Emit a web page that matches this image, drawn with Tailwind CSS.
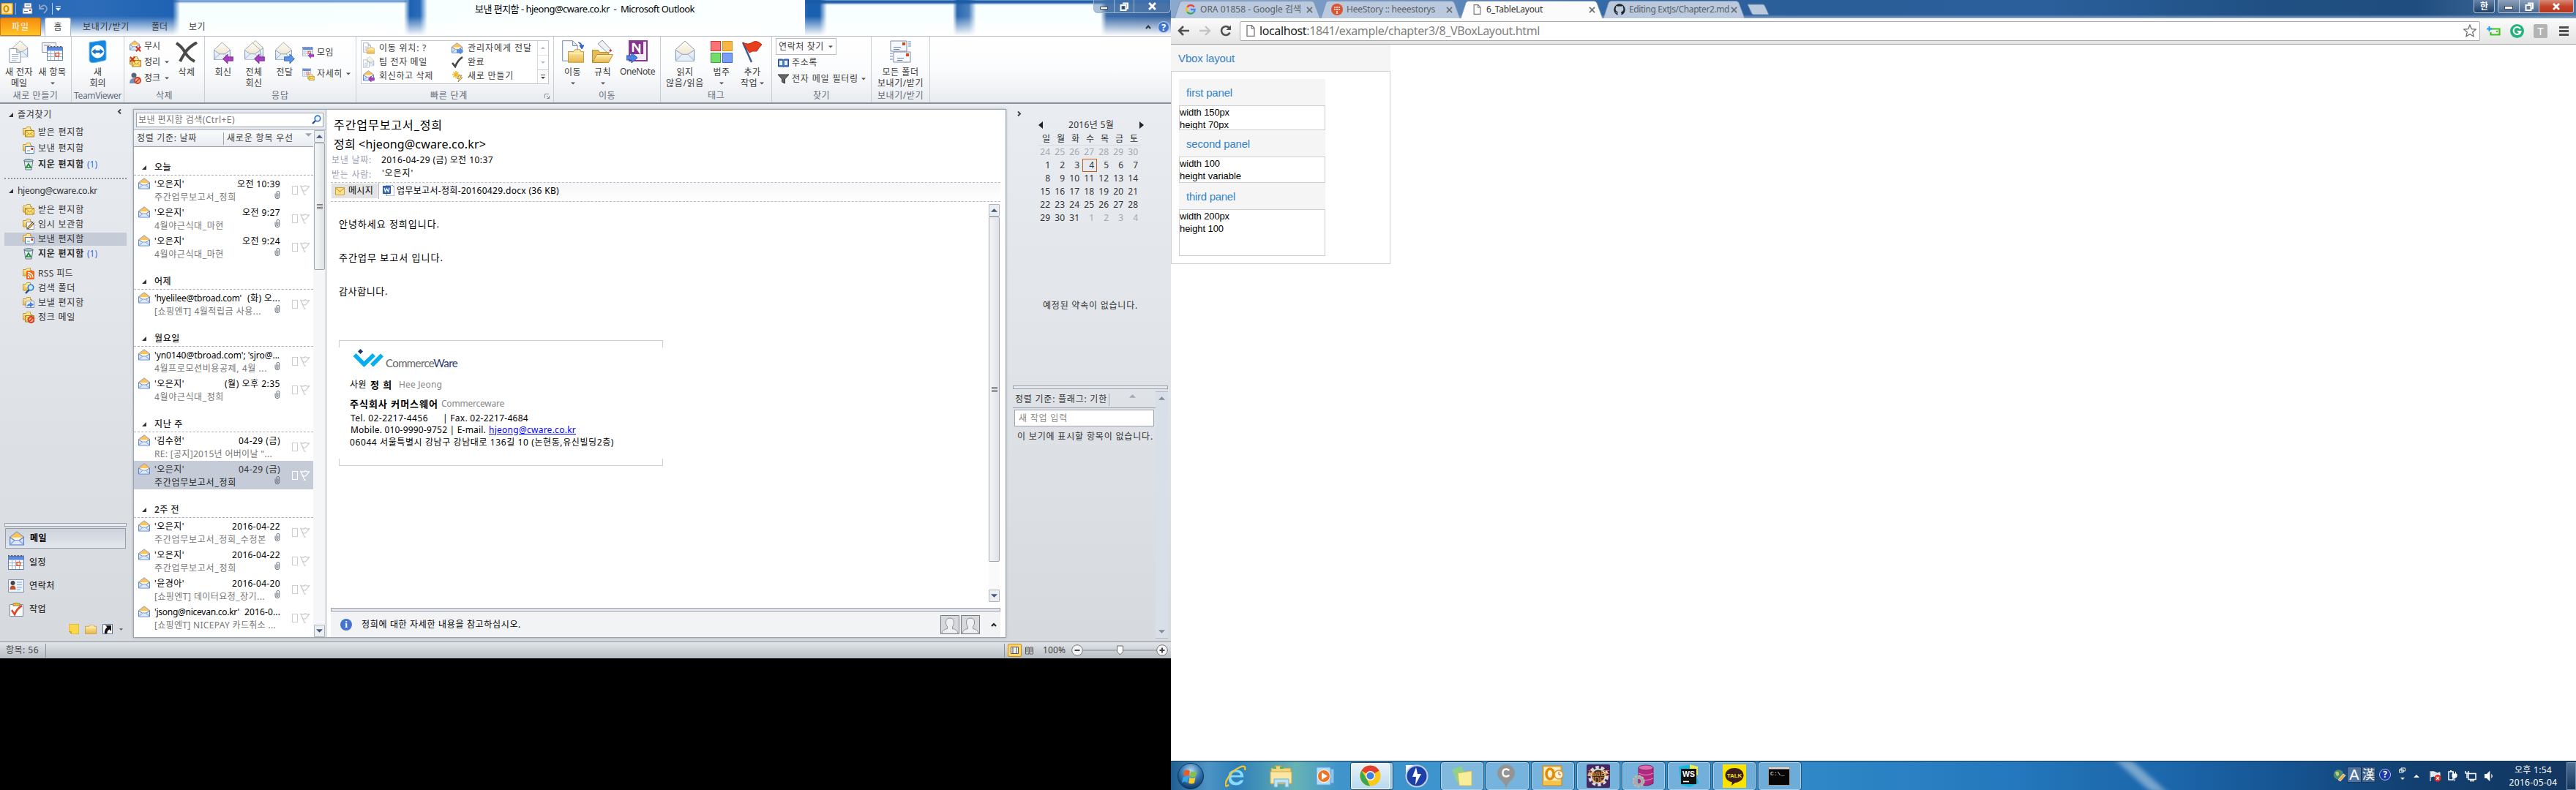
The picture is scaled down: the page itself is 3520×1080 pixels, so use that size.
<!DOCTYPE html>
<html lang="ko">
<head>
<meta charset="utf-8">
<title>Desktop</title>
<script src="https://cdn.jsdelivr.net/npm/@tailwindcss/browser@4"></script>
</head>
<body class="overflow-hidden bg-white">
<svg class="absolute size-0">
<defs>
<linearGradient id="gy" x1="0" y1="0" x2="0" y2="1"><stop offset="0" stop-color="#fdf0b0"/><stop offset="1" stop-color="#e8b84c"/></linearGradient>
<linearGradient id="gb" x1="0" y1="0" x2="0" y2="1"><stop offset="0" stop-color="#ffffff"/><stop offset="1" stop-color="#a9c4ee"/></linearGradient>
<linearGradient id="gg" x1="0" y1="0" x2="0" y2="1"><stop offset="0" stop-color="#f6faff"/><stop offset="1" stop-color="#cfdceb"/></linearGradient>
<linearGradient id="gc" x1="0" y1="0" x2="0" y2="1"><stop offset="0" stop-color="#fffdf4"/><stop offset="1" stop-color="#e6dcc0"/></linearGradient>
<radialGradient id="orb" cx=".5" cy=".3" r=".7"><stop offset="0" stop-color="#b9dcf0"/><stop offset=".5" stop-color="#3a7db5"/><stop offset="1" stop-color="#0d3563"/></radialGradient>
</defs>
<symbol id="env" viewBox="0 0 16 16"><path d="M.5 6.5 8 .7l7.500 5.800V14H.5z" fill="#f9c45c" stroke="#8795c6" stroke-width=".9"/><path d="M2 7h12l-3 3H5z" fill="#fff4d4"/><path d="M.5 7 6 10.500h4L15.500 7v8H.5z" fill="url(#gb)" stroke="#5b82cf"/><path d="m1 14.500 5-4.500h4l5 4.500" fill="#dce9fc" stroke="#7fa3e0"/></symbol>
<symbol id="bigenv" viewBox="0 0 30 32"><path d="M2 13 15 1l13 12v16H2z" fill="url(#gc)" stroke="#8e97ab"/><path d="M2 14l9 6h8l9-6v15H2z" fill="url(#gg)" stroke="#7f92b5"/><path d="m2 29 9-9h8l9 9" fill="#e6eef8" stroke="#9aa9c4"/></symbol>
<symbol id="pl" viewBox="0 0 15 14"><path d="M7 0v4h8v6H7v4L0 7z" fill="#a43fc0" stroke="#7a2496" stroke-width=".8"/></symbol>
<symbol id="br" viewBox="0 0 15 14"><path d="M8 0v4H0v6h8v4l7-7z" fill="#5a93e6" stroke="#2858ae" stroke-width=".8"/></symbol>
<symbol id="folder" viewBox="0 0 16 16"><path d="M.5 2.500h4l1-2h5v3h2V11H.5z" fill="url(#gy)" stroke="#c29a45"/><path d="M3.500 5H12v2" fill="none" stroke="#fff6cf"/></symbol>
<symbol id="bigfolder" viewBox="0 0 24 20"><path d="M.5 3.500h8l2-3h8l1 3h4v16H.5z" fill="url(#gy)" stroke="#b98d35"/><path d="M1.500 6.500h21" stroke="#fff6cf"/></symbol>
<symbol id="inbox" viewBox="0 0 16 16"><use href="#folder" width="16" height="16"/><path d="M3.500 5.500h12v8.500h-12z" fill="#ffe27c" stroke="#a57f1d"/><path d="m4 6 5.500 5L15 6M4 13.500l4-4M15 13.500l-4-4" fill="none" stroke="#c39424"/></symbol>
<symbol id="sent" viewBox="0 0 16 16"><use href="#folder" width="16" height="16"/><path d="M3.500 5.500h12v9h-12z" fill="#f4f8ff" stroke="#5877ae"/><path d="M11.500 7h2.500v3h-2.500z" fill="#c43a22"/><path d="M6 11h4" stroke="#6b84b3"/></symbol>
<symbol id="draft" viewBox="0 0 16 16"><use href="#folder" width="16" height="16"/><path d="M5.500 4.500h10v10h-10z" fill="#fff" stroke="#8a929e"/><path d="m6 13 7-8 2 2-7 7z" fill="#f6b45b" stroke="#5c4a3a"/></symbol>
<symbol id="trash" viewBox="0 0 16 16"><path d="M2 2h12l-2 13H4z" fill="#e9f2f8" stroke="#5c7284"/><ellipse cx="8" cy="2.500" rx="6.200" ry="1.700" fill="#bcd1de" stroke="#4c6274"/><path d="m8 7 3 5H5z" fill="none" stroke="#188a2c" stroke-width="1.700"/></symbol>
<symbol id="rss" viewBox="0 0 16 16"><use href="#folder" width="16" height="16"/><rect x="5" y="4" width="11" height="12" rx="1.500" fill="#ea6a1e"/><circle cx="8" cy="13" r="1.200" fill="#fff"/><path d="M7 9.500a4 4 0 0 1 4 4M7 6.500a7 7 0 0 1 7 7" fill="none" stroke="#fff" stroke-width="1.400"/></symbol>
<symbol id="sfold" viewBox="0 0 16 16"><use href="#folder" width="16" height="16"/><path d="m9 10-5 5" stroke="#1d4c8c" stroke-width="2.400"/><circle cx="11" cy="7" r="3.700" fill="#c9ecfb" stroke="#2f77c8" stroke-width="1.600"/></symbol>
<symbol id="outbox" viewBox="0 0 16 16"><use href="#folder" width="16" height="16"/><path d="M4.500 5.500h11v9h-11z" fill="#eef4ff" stroke="#8090b0"/><path d="M6 13q0-4 4-4V6.500l5 4-5 4V12q-2 0-4 1z" fill="#4c83e0"/></symbol>
<symbol id="junk" viewBox="0 0 16 16"><use href="#inbox" width="16" height="16"/><circle cx="11.500" cy="11" r="4" fill="#f2a48c" stroke="#d23a17" stroke-width="1.800"/><path d="m9 13.500 5-5" stroke="#d23a17" stroke-width="1.600"/></symbol>
<symbol id="clip" viewBox="0 0 8 12"><path d="M.8 4v4.500a3 3 0 0 0 6.200 0v-6a2 2 0 0 0-4.200 0v6a1 1 0 0 0 2.200 0V3.500" fill="none" stroke="#56606f" stroke-width="1"/></symbol>
<symbol id="flag" viewBox="0 0 15 15"><path d="M1 1.500q4 2 7-1 2 3 6 1l-6 7H4.500zM1 1.500l5.500 12.500h2" fill="none" stroke="currentColor" stroke-width="1.300"/></symbol>
<symbol id="cal" viewBox="0 0 22 20"><path d="M.5 1.500h21v18H.5z" fill="#fff" stroke="#5f7fb8"/><path d="M1 2h20v4.500H1z" fill="#5c8ae0"/><path d="M1 10.500h20M1 14.500h20M5.500 7v12M10.500 7v12M15.500 7v12" stroke="#9fb2d4"/><path d="M0 .8h22" stroke="#444" stroke-dasharray="1 1" stroke-width="1.500"/><rect x="12" y="9.500" width="4.500" height="4.500" fill="#fff" stroke="#e0401a" stroke-width="1.300"/></symbol>
<symbol id="doc" viewBox="0 0 18 22"><path d="M.7.7h11l5.600 5.600v15H.7z" fill="#fff" stroke="#7b8ba8"/><path d="M11.500 1v5.500H17" fill="#dbe4f2" stroke="#7b8ba8"/><path d="M4 9.500h10M4 12.500h10M4 15.500h10M4 18.500h7" stroke="#8e9fc0"/></symbol>
<symbol id="bigdoc" viewBox="0 0 22 29"><path d="M.7.7h14l6.500 6.500v21H.7z" fill="#fbfcff" stroke="#7b8ba8"/><path d="M14.500 1v6.500H21" fill="#dbe4f2" stroke="#7b8ba8"/></symbol>
<symbol id="pg" viewBox="0 0 12 16"><path d="M1 .7h6.500L11 4.500v10.800H1z" fill="#fff" stroke="#777" stroke-width="1.300"/><path d="M7.200.8v4H11" fill="none" stroke="#777" stroke-width="1.200"/></symbol>
<symbol id="person" viewBox="0 0 26 26"><path d="M.5.500h25v25H.5z" fill="#d6d8db" stroke="#777a80"/><path d="M2 24.500q1-5 7.500-6V16Q7 13 7.500 9q.5-5 5.500-5t5.500 5q.5 4-2 7v2.500q6.500 1 7.500 6" fill="#eff0f1" stroke="#8e9196"/></symbol>
<symbol id="up" viewBox="0 0 10 5"><path d="M0 5 5 0l5 5z" fill="currentColor"/></symbol>
<symbol id="dn" viewBox="0 0 10 5"><path d="M0 0h10L5 5z" fill="currentColor"/></symbol>
<symbol id="x" viewBox="0 0 10 10"><path d="m1 1 8 8M9 1 1 9" stroke="#6a6e75" stroke-width="1.800" fill="none"/></symbol>
<symbol id="tri" viewBox="0 0 6 6"><path d="M6 0v6H0z" fill="#333"/></symbol>
</svg>

<div class="flex h-[1080px] w-[3520px] font-['Noto_Sans','Noto_Sans_CJK_KR',sans-serif] text-[12px] leading-[16px] whitespace-nowrap text-[#333]">

<!-- Mail client on the left monitor -->
<div class="flex h-[1080px] w-[1600px] flex-col bg-black">
<div class="flex h-[900px] flex-col">

<header class="relative flex h-[49px] flex-col bg-[linear-gradient(90deg,#2465b4_0,#2d6db9_120px,#1f62b3_236px,#f6fffe_246px,#f8ffff_552px,#1f62b3_560px,#2a6cb9_574px,#f8ffff_584px,#fbffff_1060px,#1a60b0_1104px,#1a60b0_1120px,#f8ffff_1130px,#f8ffff_1302px,#2b68b0_1308px,#4a80be_1324px,#f8ffff_1334px,#f8ffff_1504px,#3a6ba8_1512px,#35639f_1600px)]">
<div class="absolute inset-0 bg-[linear-gradient(180deg,rgba(255,255,255,0)_45%,#fff_100%)]"></div>
<div class="absolute top-0 left-[236px] h-[3px] w-[320px] bg-[#1f62b3]/80 blur-[1px]"></div>
<div class="absolute top-0 left-[1100px] h-[5px] w-[500px] bg-[#1a5aa5] blur-[1px]"></div>
<div class="absolute top-0 left-[1040px] h-[49px] w-[60px] bg-[#fbffff]"></div>
<div class="relative flex h-[24px] items-center">
<svg class="ml-[1px] h-[16px] w-[17px]" viewBox="0 0 17 16"><rect width="17" height="16" rx="2" fill="#e9a018"/><rect x="2" y="1.500" width="13" height="13" fill="#ffe9a4"/><ellipse cx="7.500" cy="8" rx="3" ry="4" fill="none" stroke="#d88a00" stroke-width="2.200"/></svg>
<i class="ml-[3px] h-4 w-px bg-white/50"></i>
<svg class="ml-[6px] h-[16px] w-[17px]" viewBox="0 0 17 16"><path d="M5 0h10v7H5z" fill="#fff" stroke="#6b7f9c"/><path d="M3 7h13v8H3z" fill="#f6f9ff" stroke="#6b7f9c"/><path d="M12 9h2v2h-2z" fill="#c43a22"/><path d="M0 4h4M0 7h3M0 11h2M5 11.500h5M7 3h6" stroke="#4a6ea8"/></svg>
<svg class="ml-[7px] h-[14px] w-[13px]" viewBox="0 0 13 14"><path d="M2 1v6h6M2.500 6Q8 0 11 4t-3 9" fill="none" stroke="#8ba4c8" stroke-width="1.800"/></svg>
<i class="ml-[6px] h-4 w-px bg-white/70"></i>
<svg class="ml-[4px] h-[8px] w-[7px]" viewBox="0 0 7 8"><path d="M0 1h7" stroke="#fff"/><path d="M0 3h7L3.500 7z" fill="#fff"/></svg>
<div class="ml-[566px] text-[13px] text-black"><span data-w="300">보낸 편지함 - hjeong@cware.co.kr&nbsp; -&nbsp; Microsoft Outlook</span></div>
<div class="ml-auto flex h-[18px] w-[106px] self-start rounded-b-md border border-t-0 border-[#9db4cf] bg-[#5e83b0]/50">
<div class="flex w-[28px] items-center justify-center border-r border-[#9db4cf]"><i class="mt-1 h-[4px] w-[11px] border border-[#445] bg-white"></i></div>
<div class="flex w-[27px] items-center justify-center border-r border-[#9db4cf]"><svg class="h-[12px] w-[12px]" viewBox="0 0 12 12"><path d="M4 1.500h7v7H9M1.500 4h7v7h-7z" fill="none" stroke="#fff" stroke-width="2"/><path d="M3.500 6h3v3h-3z" fill="#345"/></svg></div>
<div class="flex flex-1 items-center justify-center"><svg class="h-[11px] w-[11px]" viewBox="0 0 10 10"><path d="m1 1 8 8M9 1 1 9" stroke="#fff" stroke-width="2.600"/></svg></div>
</div>
</div>
<nav class="relative flex h-[25px] text-[12px] text-[#3b3b3b]">
<div class="flex w-[56px] items-center justify-center rounded-t-[3px] border border-[#d8780c] bg-gradient-to-b from-[#f58a0c] to-[#ffc426] text-white"><span data-w="24">파일</span></div>
<div class="ml-[5px] flex w-[36px] items-center justify-center rounded-t-[3px] border border-b-0 border-[#a6b6c6] bg-white"><span>홈</span></div>
<div class="ml-[16px] flex items-center"><span data-w="64">보내기/받기</span></div>
<div class="ml-[30px] flex items-center"><span data-w="22">폴더</span></div>
<div class="ml-[29px] flex items-center"><span data-w="23">보기</span></div>
<div class="ml-auto flex items-center gap-[9px] pr-[2px]"><svg class="h-[7px] w-[8px]" viewBox="0 0 8 7"><path d="m1 6 3-3.500L7 6" fill="none" stroke="#333" stroke-width="2"/></svg><span class="flex size-[16px] items-center justify-center rounded-full border border-white/60 bg-[#3f74cf] text-[13px] font-bold text-white">?</span></div>
</nav>
</header>

<!-- Ribbon -->
<div class="flex h-[93px] border-t border-b-2 border-t-[#b4bac2] border-b-[#8b8f96] bg-gradient-to-b from-white via-[#fbfcfd] to-[#e8ebef] text-[#3b3b3b]">
<section class="flex w-[98px] flex-col border-r border-[#c9ced5]">
<div class="flex h-[73px] pt-[5px]">
<div class="flex w-[49px] flex-col items-center pl-[3px]"><div class="relative h-[31px] w-[29px]"><svg class="absolute top-0 right-0 h-[25px] w-[27px]"><use href="#bigenv"/></svg><svg class="absolute bottom-0 left-0 h-[20px] w-[17px]"><use href="#doc"/></svg></div><span class="mt-[5px]" data-w="38">새 전자</span><span class="mt-[-1px]" data-w="22">메일</span></div>
<div class="flex w-[45px] flex-col items-center"><div class="relative h-[31px] w-[29px]"><svg class="absolute top-[3px] left-0 h-[14px] w-[20px]" viewBox="0 0 20 14"><path d="M.5.500h19v13H.5z" fill="#f2f4f8" stroke="#8a95aa"/><path d="M3 4h9" stroke="#889"/></svg><svg class="absolute right-0 bottom-[3px] h-[20px] w-[22px]"><use href="#cal"/></svg></div><span class="mt-[5px]" data-w="38">새 항목</span><svg class="mt-[5px] h-[4px] w-[6px] text-[#555]"><use href="#dn"/></svg></div>
</div>
<div class="flex justify-center text-[#636d7b]"><span data-w="62">새로 만들기</span></div>
</section>
<section class="flex w-[72px] flex-col border-r border-[#c9ced5]">
<div class="flex h-[73px] flex-col items-center pt-[5px]"><svg class="h-[31px] w-[27px]" viewBox="0 0 27 31"><path d="M2 3 22 0q3 0 3 3v22q0 3-3 3L8 31Q2 31 2 27z" fill="#1587dd" stroke="#7cc0f0"/><circle cx="13.500" cy="15.500" r="9" fill="#fff"/><path d="m5.500 15.500 5-4v2.500h6v-2.500l5 4-5 4V17h-6v2.500z" fill="#1474c8"/></svg><span class="mt-[5px]">새</span><span class="mt-[-1px]" data-w="22">회의</span></div>
<div class="flex justify-center text-[#636d7b]"><span data-w="65">TeamViewer</span></div>
</section>
<section class="flex w-[110px] flex-col border-r border-[#c9ced5]">
<div class="flex h-[73px] pl-[7px]">
<div class="flex w-[63px] flex-col gap-[6px] pt-[5px]">
<div class="flex items-center gap-[4px]"><div class="relative size-4"><svg class="size-[14px]"><use href="#env"/></svg><svg class="absolute right-0 bottom-0 size-[8px]" viewBox="0 0 10 10"><path d="m1 1 8 8M9 1 1 9" stroke="#d8341c" stroke-width="2.400"/></svg></div><span data-w="22">무시</span></div>
<div class="flex items-center gap-[4px]"><div class="relative size-4"><svg class="size-4"><use href="#inbox"/></svg><svg class="absolute top-0 left-0 size-[8px]" viewBox="0 0 10 10"><path d="m1 1 8 8M9 1 1 9" stroke="#d8341c" stroke-width="2.400"/></svg></div><span data-w="22">정리</span><svg class="ml-[2px] h-[4px] w-[6px] text-[#555]"><use href="#dn"/></svg></div>
<div class="flex items-center gap-[4px]"><svg class="size-4" viewBox="0 0 16 16"><circle cx="6" cy="4" r="3.500" fill="#55657c"/><path d="M0 15q0-7 6-7t6 7z" fill="#6d8fc4"/><circle cx="11" cy="11" r="4" fill="#f6b09c" stroke="#d23a17" stroke-width="1.800"/><path d="m8.500 13.500 5-5" stroke="#d23a17" stroke-width="1.600"/></svg><span data-w="22">정크</span><svg class="ml-[2px] h-[4px] w-[6px] text-[#555]"><use href="#dn"/></svg></div>
</div>
<div class="flex flex-col items-center pt-[7px]"><svg class="h-[29px] w-[30px]" viewBox="0 0 30 29"><path d="M1 2q8 5 12 13Q9 21 6 27M29 1Q17 8 13 15q5 8 13 12" fill="none" stroke="#4a4a4a" stroke-width="4"/></svg><span class="mt-[5px]" data-w="23">삭제</span></div>
</div>
<div class="flex justify-center text-[#636d7b]"><span data-w="23">삭제</span></div>
</section>
<section class="flex w-[207px] flex-col border-r border-[#c9ced5]">
<div class="flex h-[73px] pt-[7px]">
<div class="ml-[4px] flex w-[42px] flex-col items-center"><div class="relative h-[30px] w-[28px]"><svg class="h-[27px] w-[25px]"><use href="#bigenv"/></svg><svg class="absolute right-0 bottom-0 h-[13px] w-[15px]"><use href="#pl"/></svg></div><span class="mt-[4px]" data-w="23">회신</span></div>
<div class="flex w-[42px] flex-col items-center"><div class="relative h-[30px] w-[29px]"><svg class="absolute top-[-3px] left-[4px] h-[27px] w-[24px]"><use href="#bigenv"/></svg><svg class="absolute top-0 left-0 h-[27px] w-[24px]"><use href="#bigenv"/></svg><svg class="absolute right-0 bottom-0 h-[13px] w-[15px]"><use href="#pl"/></svg></div><span class="mt-[4px]" data-w="23">전체</span><span class="mt-[-1px]" data-w="23">회신</span></div>
<div class="flex w-[42px] flex-col items-center"><div class="relative h-[30px] w-[28px]"><svg class="h-[27px] w-[25px]"><use href="#bigenv"/></svg><svg class="absolute right-0 bottom-0 h-[13px] w-[15px]"><use href="#br"/></svg></div><span class="mt-[4px]" data-w="23">전달</span></div>
<div class="flex flex-col gap-[13px] pt-[7px] pl-[3px]">
<div class="flex items-center gap-[4px]"><div class="relative size-4"><svg class="h-[13px] w-[15px]"><use href="#cal"/></svg><svg class="absolute right-0 bottom-0 h-[8px] w-[8px]"><use href="#pl"/></svg></div><span data-w="23">모임</span></div>
<div class="flex items-center gap-[4px]"><div class="relative size-4"><svg class="h-[12px] w-[12px]"><use href="#cal"/></svg><svg class="absolute right-[-1px] bottom-[-2px] size-[10px]"><use href="#inbox"/></svg></div><span data-w="35">자세히</span><svg class="ml-[1px] h-[4px] w-[6px] text-[#555]"><use href="#dn"/></svg></div>
</div>
</div>
<div class="flex justify-center text-[#636d7b]"><span data-w="24">응답</span></div>
</section>
<section class="flex w-[270px] flex-col border-r border-[#c9ced5]">
<div class="flex h-[73px] px-[6px] pt-[5px]">
<div class="flex h-[60px] w-full border border-[#c3c8d0]">
<div class="grid flex-1 grid-cols-[121px_1fr] grid-rows-3 items-center bg-white pl-[2px]">
<div class="flex items-center gap-[6px]"><div class="relative size-4"><svg class="h-[14px] w-[11px]"><use href="#doc"/></svg><svg class="absolute right-0 bottom-0 h-[10px] w-[11px]"><use href="#bigfolder"/></svg></div><span data-w="65">이동 위치: ?</span></div>
<div class="flex items-center gap-[6px]"><div class="relative size-4"><svg class="size-[15px]"><use href="#env"/></svg><svg class="absolute right-0 bottom-0 h-[8px] w-[9px]"><use href="#br"/></svg></div><span data-w="88">관리자에게 전달</span></div>
<div class="flex items-center gap-[6px]"><div class="relative size-4"><svg class="absolute right-0 size-[14px]"><use href="#bigenv"/></svg><svg class="absolute bottom-0 left-0 h-[12px] w-[9px]"><use href="#doc"/></svg></div><span data-w="66">팀 전자 메일</span></div>
<div class="flex items-center gap-[6px]"><svg class="size-4" viewBox="0 0 16 16"><path d="m1 9 4 5Q8 6 15 1" fill="none" stroke="#444" stroke-width="2.600"/></svg><span data-w="23">완료</span></div>
<div class="flex items-center gap-[6px]"><div class="relative size-4"><svg class="size-[15px]"><use href="#env"/></svg><svg class="absolute right-0 bottom-0 h-[8px] w-[9px]"><use href="#pl"/></svg></div><span data-w="74">회신하고 삭제</span></div>
<div class="flex items-center gap-[6px]"><svg class="size-4" viewBox="0 0 16 16"><path d="M6 1v10M1 6h10M2.500 2.500l7 7M9.500 2.500l-7 7" stroke="#efb82b" stroke-width="1.600"/><path d="M10 7h4l-2 3h3l-6 6 1.500-4.500H8z" fill="#f8d98a" stroke="#8c6a2a" stroke-width=".7"/></svg><span data-w="63">새로 만들기</span></div>
</div>
<div class="flex w-[15px] flex-col border-l border-[#d7dbe0] bg-white">
<div class="flex h-[20px] items-center justify-center border-b border-[#dde0e4] text-[#b5b9bf]"><svg class="h-[3px] w-[6px]"><use href="#up"/></svg></div>
<div class="flex h-[20px] items-center justify-center border-b border-[#c3c8d0] text-[#b5b9bf]"><svg class="h-[3px] w-[6px]"><use href="#dn"/></svg></div>
<div class="flex flex-1 flex-col items-center justify-center gap-[2px] text-[#444]"><i class="h-px w-[6px] bg-[#444]"></i><svg class="h-[3px] w-[6px]"><use href="#dn"/></svg></div>
</div>
</div>
</div>
<div class="relative flex justify-center pr-[16px] text-[#636d7b]"><span data-w="51">빠른 단계</span><svg class="absolute top-[5px] right-[5px] size-[7px]" viewBox="0 0 7 7"><path d="M.5 6V.5H6M3 3l3.500 3.500M6.500 3v3.500H3" fill="none" stroke="#8a9098"/></svg></div>
</section>
<section class="flex w-[146px] flex-col border-r border-[#c9ced5]">
<div class="flex h-[73px] pt-[5px]">
<div class="ml-[5px] flex w-[41px] flex-col items-center"><div class="relative h-[31px] w-[30px]"><svg class="h-[29px] w-[22px]"><use href="#bigdoc"/></svg><svg class="absolute right-0 bottom-0 h-[19px] w-[22px]"><use href="#bigfolder"/></svg><svg class="absolute top-[2px] right-0 h-[11px] w-[9px]" viewBox="0 0 9 11"><path d="M1 1q5 0 5 5M3 5h6l-3 5z" fill="#2f66c4" stroke="#2f66c4"/></svg></div><span class="mt-[5px]" data-w="23">이동</span><svg class="mt-[5px] h-[4px] w-[6px] text-[#555]"><use href="#dn"/></svg></div>
<div class="flex w-[41px] flex-col items-center"><div class="relative h-[31px] w-[30px]"><svg class="absolute top-0 left-[8px] h-[18px] w-[20px]" viewBox="0 0 20 18"><path d="m0 5 6-5 13 14-5 4z" fill="#eef1f6" stroke="#8a93a5"/><circle cx="17" cy="14" r="1.500" fill="#d33"/></svg><svg class="absolute bottom-0 left-0 h-[20px] w-[29px]" viewBox="0 0 29 20"><path d="M.5 19.500V2.500h8l2 3h12v4" fill="#e9bd55" stroke="#b98d35"/><path d="m.5 19.500 6-11h22l-6 11z" fill="url(#gy)" stroke="#b98d35"/></svg></div><span class="mt-[5px]" data-w="23">규칙</span><svg class="mt-[5px] h-[4px] w-[6px] text-[#555]"><use href="#dn"/></svg></div>
<div class="flex w-[54px] flex-col items-center"><svg class="h-[31px] w-[30px]" viewBox="0 0 30 31"><path d="M4 1h24v27H4z" fill="#f4ecf6" stroke="#8a3a94" stroke-width="2"/><path d="M5 2h18v17H5z" fill="#86318f"/><path d="M9 16V5h1.500L18 16V5" fill="none" stroke="#fff" stroke-width="2.600"/><path d="M0 21h7v-4l8 7-8 7v-4H0z" fill="#4c83e0" stroke="#2858ae"/></svg><span class="mt-[4px]" data-w="48">OneNote</span></div>
</div>
<div class="flex justify-center text-[#636d7b]"><span data-w="23">이동</span></div>
</section>
<section class="flex w-[152px] flex-col border-r border-[#c9ced5]">
<div class="flex h-[73px] pt-[5px]">
<div class="ml-[5px] flex w-[56px] flex-col items-center"><svg class="h-[31px] w-[32px]"><use href="#bigenv"/></svg><span class="mt-[5px]" data-w="23">읽지</span><span class="mt-[-1px]" data-w="52">않음/읽음</span></div>
<div class="flex w-[44px] flex-col items-center"><div class="mt-[1px] grid size-[30px] grid-cols-2 grid-rows-2 gap-[2px]"><i class="border border-[#d93030] bg-[#f97474]"></i><i class="border border-[#d9951a] bg-[#f9b545]"></i><i class="border border-[#3da63a] bg-[#75dc6b]"></i><i class="border border-[#3967d6] bg-[#7a9ff7]"></i></div><span class="mt-[5px]" data-w="23">범주</span><svg class="mt-[5px] h-[4px] w-[6px] text-[#555]"><use href="#dn"/></svg></div>
<div class="flex w-[40px] flex-col items-center"><svg class="h-[31px] w-[28px]" viewBox="0 0 28 31"><path d="m1 3 12 27" stroke="#3a5a92" stroke-width="2.400"/><path d="M1 3q7 4 13 0t13 3q-4 4-7 9-6-1-10 2z" fill="#e8401d" stroke="#b92c10"/></svg><span class="mt-[5px]" data-w="23">추가</span><div class="mt-[-1px] flex items-center gap-[3px]"><span data-w="23">작업</span><svg class="h-[4px] w-[6px] text-[#555]"><use href="#dn"/></svg></div></div>
</div>
<div class="flex justify-center text-[#636d7b]"><span data-w="23">태그</span></div>
</section>
<section class="flex w-[136px] flex-col border-r border-[#c9ced5]">
<div class="flex h-[73px] flex-col pt-[2px] pl-[5px]">
<div class="flex h-[23px] w-[83px] items-center border border-[#b5bcc6] bg-white pl-[3px]"><span data-w="62">연락처 찾기</span><svg class="ml-[6px] h-[4px] w-[6px] text-[#555]"><use href="#dn"/></svg></div>
<div class="mt-[3px] flex items-center gap-[4px] pl-[3px]"><svg class="h-[13px] w-[15px]" viewBox="0 0 15 13"><path d="M.5 1h6l1 1 1-1h6v10h-6l-1 1-1-1h-6z" fill="#4a7cc8" stroke="#2a4f90"/><path d="M2 3h4v6H2zM9 3h4v6H9z" fill="#e9f1fc"/></svg><span data-w="35">주소록</span></div>
<div class="mt-[6px] flex items-center gap-[4px] pl-[3px]"><svg class="h-[14px] w-[15px]" viewBox="0 0 15 14"><path d="M0 1h15L9.500 7v6l-4-2V7z" fill="#666" stroke="#333"/></svg><span data-w="91">전자 메일 필터링</span><svg class="h-[4px] w-[6px] text-[#555]"><use href="#dn"/></svg></div>
</div>
<div class="flex justify-center text-[#636d7b]"><span data-w="23">찾기</span></div>
</section>
<section class="flex w-[80px] flex-col border-r border-[#c9ced5]">
<div class="flex h-[73px] flex-col items-center pt-[5px]"><svg class="h-[31px] w-[31px]" viewBox="0 0 31 31"><path d="M2 1h22v14H2zM6 16h23v14H6z" fill="#f8faff" stroke="#7b8ba8"/><path d="M18 3h4v4h-4zM23 18h4v4h-4z" fill="#e0441f"/><path d="M6 9.500h10M6 12.500h8M11 24.500h9M11 27.500h7M26 2h4M26 5h4M26 8h4M1 18h4M1 22h4M1 26h4" stroke="#5b83c4"/></svg><span class="mt-[5px]" data-w="50">모든 폴더</span><span class="mt-[-1px]" data-w="63">보내기/받기</span></div>
<div class="flex justify-center text-[#636d7b]"><span data-w="63">보내기/받기</span></div>
</section>
</div>

<!-- Workspace -->
<main class="flex h-[735px] bg-gradient-to-b from-[#e9edf2] to-[#d6dade]">
<aside class="flex w-[182px] flex-col pl-[6px] text-[#333]">
<div class="flex h-[28px] items-center pt-[1px] pl-[6px]"><svg class="size-[6px]"><use href="#tri"/></svg><span class="ml-[6px]" data-w="47">즐겨찾기</span><svg class="mb-[8px] ml-auto mr-[16px] h-[7px] w-[6px]" viewBox="0 0 6 7"><path d="M5 .5 2 3.500l3 3" fill="none" stroke="#444" stroke-width="2"/></svg></div>
<div id="fav" class="flex flex-col"></div>
<div class="mt-[7px] h-[3px] w-[167px] border-t-2 border-dotted border-[#8f959d]"></div>
<div class="mt-[3px] flex h-[24px] items-center pl-[6px]"><svg class="size-[6px]"><use href="#tri"/></svg><span class="ml-[6px]" data-w="109">hjeong@cware.co.kr</span></div>
<div id="acct" class="mt-[4px] flex flex-col"></div>
<div class="mt-auto h-[5px] w-[167px] border border-[#9aa3ae] bg-[#e8ebef]"></div>
<div class="mt-[2px] ml-px flex h-[28px] w-[165px] items-center border border-[#959ea9] bg-gradient-to-b from-[#cdd3dc] to-[#e3e7ed] pl-[5px] font-bold text-black"><svg class="size-[20px]"><use href="#env"/></svg><span class="ml-[8px]" data-w="23">메일</span></div>
<div class="mt-[3px] flex h-[32px] items-center pl-[5px]"><svg class="h-[20px] w-[22px]"><use href="#cal"/></svg><span class="ml-[7px] font-medium" data-w="23">일정</span></div>
<div class="flex h-[32px] items-center pl-[5px]"><svg class="h-[18px] w-[22px]" viewBox="0 0 22 18"><path d="M.5.500h21v17H.5z" fill="#eef3fb" stroke="#8595b0"/><circle cx="6.500" cy="5" r="3" fill="#444"/><path d="M2.500 14q0-5.500 4-5.500t4 5.500z" fill="#c0532d"/><path d="M12 4h7M12 7.500h7M12 11h7M12 14h5" stroke="#7da2dc"/></svg><span class="ml-[7px] font-medium" data-w="35">연락처</span></div>
<div class="flex h-[32px] items-center pl-[7px]"><svg class="h-[20px] w-[20px]" viewBox="0 0 20 20"><path d="M.5 3.500h18v16H.5z" fill="#fdfdfe" stroke="#7d8ba5"/><path d="M5 2h3q1-2 3 0h3v3H5z" fill="#eec04a" stroke="#9a7a20"/><path d="m3 11 4 6Q10 9 17 5" fill="none" stroke="#e0452a" stroke-width="2.600"/></svg><span class="ml-[7px] font-medium" data-w="23">작업</span></div>
<div class="mb-[6px] flex h-[22px] items-center pl-[88px]"><svg class="size-[14px]" viewBox="0 0 14 14"><path d="M0 0h14v14H4L0 10z" fill="#f9d84c" stroke="#d0a420"/><path d="M0 10h4v4" fill="#e0a820"/></svg><svg class="ml-[8px] h-[13px] w-[16px]"><use href="#bigfolder"/></svg><svg class="ml-[8px] size-[14px]" viewBox="0 0 14 14"><path d="M.5.500h13v13H.5z" fill="#fff" stroke="#5a70a0"/><path d="M4 2h8v8l-2.500-2.500Q6 9 6.500 13H3q-1-5 3.500-8.500z" fill="#111"/></svg><svg class="ml-[9px] h-[3px] w-[5px] text-[#555]"><use href="#dn"/></svg></div>
</aside>

<div class="mt-[7px] flex h-[723px] w-[1193px] border border-[#9ba3b0] bg-white shadow-[0_0_3px_#9aa]">
<div class="flex w-[263px] flex-col border-r border-[#9ba3b0]">
<div class="flex h-[28px] items-center border-b border-[#aab1bc] bg-[#e6eaef] px-[3px]"><div class="flex h-[20px] w-full items-center border border-[#9ba3b0] bg-white px-[2px] text-[#777]"><span data-w="132">보낸 편지함 검색(Ctrl+E)</span><svg class="ml-auto h-[13px] w-[13px]" viewBox="0 0 13 13"><path d="M5.500 7.500 1 12" stroke="#274f8e" stroke-width="2.400"/><circle cx="8" cy="5" r="3.800" fill="#eaf6fd" stroke="#3a7ac4" stroke-width="1.700"/></svg></div></div>
<div class="flex flex-1">
<div class="flex w-[245px] flex-col">
<div class="flex h-[23px] items-center border-b border-[#9ba3b0] bg-gradient-to-b from-[#fafbfc] to-[#e7ebf0] text-[#444]"><span class="ml-[4px]" data-w="82">정렬 기준: 날짜</span><i class="ml-auto h-[17px] w-px bg-[#9ba3b0]"></i><span class="ml-[4px]" data-w="91">새로운 항목 우선</span><svg class="mr-[2px] mb-[9px] ml-[16px] h-[5px] w-[9px] text-[#9aa4ae]"><use href="#dn"/></svg></div>
<div id="list" class="flex flex-col"></div>
</div>
<div class="flex w-[17px] flex-col items-center bg-[#f5f6f7] px-px">
<div class="flex h-[17px] w-full items-center justify-center rounded-[1px] border border-[#aeb4bd] bg-[#eceff2] text-[#46557c]"><svg class="h-[5px] w-[9px]"><use href="#up"/></svg></div>
<div class="flex h-[174px] w-full flex-col items-center justify-center gap-px rounded-[2px] border border-[#9fa5ae] bg-gradient-to-r from-[#f4f5f6] to-[#dfe2e6]"><i class="h-px w-[8px] bg-[#777]"></i><i class="h-px w-[8px] bg-[#777]"></i><i class="h-px w-[8px] bg-[#777]"></i><i class="h-px w-[8px] bg-[#777]"></i></div>
<div class="mt-auto flex h-[17px] w-full items-center justify-center rounded-[1px] border border-[#aeb4bd] bg-[#eceff2] text-[#46557c]"><svg class="h-[5px] w-[9px]"><use href="#dn"/></svg></div>
</div>
</div>
</div>

<article class="flex w-[928px] flex-col pr-[7px] pl-[6px] text-black">
<div class="mt-[10px] flex h-[22px] items-center pl-[4px] text-[16px]"><span data-w="149">주간업무보고서_정희</span></div>
<div class="mt-[4px] flex h-[22px] items-center pl-[4px] text-[16px]"><span data-w="208">정희 &lt;hjeong@cware.co.kr&gt;</span></div>
<div class="mt-[1px] flex h-[19px] items-center pl-[1px]"><span class="w-[68px] text-[#9b9fb8]"><span data-w="55">보낸 날짜:</span></span><span data-w="153">2016-04-29 (금) 오전 10:37</span></div>
<div class="flex h-[21px] items-center pl-[1px]"><span class="w-[69px] text-[#9b9fb8]"><span data-w="55">받는 사람:</span></span><span class="mb-[4px]" data-w="43">'오은지'</span></div>
<div class="flex h-[27px] border-y border-dashed border-[#b9bdc3] bg-gradient-to-b from-[#f5f6f8] to-white"><div class="mt-px ml-px flex h-[20px] w-[63px] items-center bg-[#e3e3e3] pl-[5px]"><svg class="h-[11px] w-[13px]" viewBox="0 0 13 11"><path d="M.5.500h12v10H.5z" fill="#fde08a" stroke="#caa03a"/><path d="m.5 1 6 5 6-5" fill="none" stroke="#b88a20"/></svg><span class="ml-[5px]" data-w="34">메시지</span></div><i class="ml-px h-[22px] w-px bg-[#b5b8bd]"></i><div class="flex h-[21px] items-center"><svg class="ml-[5px] h-[15px] w-[16px]" viewBox="0 0 16 15"><path d="M5 0h8l3 3v12H5z" fill="#fff" stroke="#6a84b4"/><path d="M.5 1.500h10v10H.5z" fill="#3d6fc0" stroke="#2a4f90"/><path d="m2 4 1.500 5L5.500 5l2 4L9 4" fill="none" stroke="#fff" stroke-width="1.200"/></svg><span class="ml-[3px]" data-w="222">업무보고서-정희-20160429.docx (36 KB)</span></div></div>
<div class="flex flex-1">
<div class="flex flex-1 flex-col pl-[11px] text-[13px]">
<p class="mt-[22px] h-[20px]"><span data-w="138">안녕하세요 정희입니다.</span></p>
<p class="mt-[26px] h-[20px]"><span data-w="143">주간업무 보고서 입니다.</span></p>
<p class="mt-[26px] h-[20px]"><span data-w="67">감사합니다.</span></p>
<div class="mt-[55px] flex h-[172px] w-[443px] flex-col text-[12px]">
<div class="h-[10px] shrink-0 border border-b-0 border-[#ccc]"></div>
<div class="flex h-[30px] items-end pl-[19px]"><svg class="mb-[2px] h-[26px] w-[43px]" viewBox="0 0 43 26"><path d="m2.500 8 13 13L29 8M26 22.500 40 8.500" fill="none" stroke="#04aef0" stroke-width="5.600"/><path d="m10.500 0 3.500 3.500L10.500 7 7 3.500z" fill="#24356e"/></svg><span class="ml-[2px] font-['Lato'] text-[15px] leading-[17px] text-[#666]" data-w="98">Commerce<span class="text-[#2e3b73]">Ware</span></span></div>
<div class="mt-[12px] flex h-[18px] items-center pl-[15px]"><span data-w="23">사원</span><span class="ml-[5px] text-[13px] font-bold" data-w="30">정 희</span><span class="ml-[9px] text-[#888]" data-w="59">Hee Jeong</span></div>
<div class="mt-[8px] flex h-[18px] items-center pl-[15px]"><span class="text-[13px] font-bold" data-w="121">주식회사 커머스웨어</span><span class="ml-[4px] text-[#888]" data-w="86">Commerceware</span></div>
<div class="mt-[3px] flex h-[16px] items-center pl-[16px]"><span data-w="106">Tel. 02-2217-4456</span><span class="ml-[20px]" data-w="117">| Fax. 02-2217-4684</span></div>
<div class="flex h-[16px] items-center pl-[16px]"><span data-w="185">Mobile. 010-9990-9752 | E-mail.</span><span class="ml-[4px] text-[#0000ff] underline" data-w="119">hjeong@cware.co.kr</span></div>
<div class="flex h-[18px] items-center pl-[15px]"><span data-w="361">06044 서울특별시 강남구 강남대로 136길 10 (논현동,유신빌딩2층)</span></div>
<div class="mt-auto h-[10px] shrink-0 border border-t-0 border-[#ccc]"></div>
</div>
</div>
<div class="mt-[3px] mr-px mb-[8px] flex w-[15px] flex-col items-center bg-[#fafafa]">
<div class="flex h-[17px] w-full items-center justify-center rounded-[1px] border border-[#aeb4bd] bg-[#eceff2] text-[#46557c]"><svg class="h-[5px] w-[9px]"><use href="#up"/></svg></div>
<div class="flex h-[472px] w-full flex-col items-center justify-center gap-px rounded-[2px] border border-[#9fa5ae] bg-gradient-to-r from-[#f4f5f6] to-[#dfe2e6]"><i class="h-px w-[8px] bg-[#777]"></i><i class="h-px w-[8px] bg-[#777]"></i><i class="h-px w-[8px] bg-[#777]"></i><i class="h-px w-[8px] bg-[#777]"></i></div>
<div class="mt-auto flex h-[17px] w-full items-center justify-center rounded-[1px] border border-[#aeb4bd] bg-[#eceff2] text-[#46557c]"><svg class="h-[5px] w-[9px]"><use href="#dn"/></svg></div>
</div>
</div>
<div class="h-[5px] border border-[#9ba3b0] bg-[#e4e8ee]"></div>
<div class="flex h-[35px] items-center bg-[#f1f3f5] pl-[13px]"><span class="flex size-[16px] items-center justify-center rounded-full bg-[#4674cc] font-['Liberation_Serif'] text-[13px] font-bold text-white">i</span><span class="ml-[13px]" data-w="218">정희에 대한 자세한 내용을 참고하십시오.</span><svg class="ml-auto size-[26px]"><use href="#person"/></svg><svg class="ml-[2px] size-[26px]"><use href="#person"/></svg><svg class="mr-[5px] ml-[15px] h-[6px] w-[8px]" viewBox="0 0 8 6"><path d="m1 5 3-3 3 3" fill="none" stroke="#222" stroke-width="2.200"/></svg></div>
</article>
</div>

<aside class="flex w-[225px] flex-col pl-[9px] text-[#333]">
<div class="flex h-[18px] items-center pt-[8px] pl-[6px]"><svg class="h-[7px] w-[6px]" viewBox="0 0 6 7"><path d="m1 .5 3 3-3 3" fill="none" stroke="#444" stroke-width="2"/></svg></div>
<div class="flex h-[21px] items-center pl-[35px]"><svg class="h-[10px] w-[6px]" viewBox="0 0 6 10"><path d="M6 0v10L0 5z" fill="#222"/></svg><div class="flex w-[132px] justify-center"><span data-w="62">2016년 5월</span></div><svg class="h-[10px] w-[6px]" viewBox="0 0 6 10"><path d="M0 0v10l6-5z" fill="#222"/></svg></div>
<div id="wk" class="ml-[35px] grid h-[18px] w-[140px] grid-cols-7 items-center border-b border-[#d7dce2] text-right"></div>
<div id="days" class="ml-[35px] grid w-[140px] grid-cols-7 text-right leading-[18px]"></div>
<div class="mt-[103px] flex h-[18px] justify-center pr-[4px]"><span data-w="130">예정된 약속이 없습니다.</span></div>
<div class="mt-[99px] h-[5px] w-[212px] border border-[#9ba3b0] bg-[#e6e9ee]"></div>
<div class="mt-[3px] flex h-[338px] w-[212px]">
<div class="flex w-[195px] flex-col"><div class="flex h-[23px] items-center border-b border-[#9ba3b0] pl-[3px]"><span data-w="126">정렬 기준: 플래그: 기한</span><i class="ml-[2px] h-[17px] w-px bg-[#9ba3b0]"></i><svg class="mb-[9px] ml-[27px] h-[5px] w-[9px] text-[#a0a8b2]"><use href="#up"/></svg></div>
<div class="mt-[2px] ml-[2px] flex h-[23px] w-[191px] items-center border border-[#9ba3b0] bg-white pl-[5px] text-[#888]"><span data-w="67">새 작업 입력</span></div>
<div class="mt-[6px] ml-[6px]"><span data-w="186">이 보기에 표시할 항목이 없습니다.</span></div></div>
<div class="flex w-[17px] flex-col items-center justify-between border-y border-[#b5bcc4] bg-[#d9dfe9] py-[6px] text-[#7f8c90]"><svg class="h-[5px] w-[9px]"><use href="#up"/></svg><svg class="h-[5px] w-[9px]"><use href="#dn"/></svg></div>
</div>
</aside>
</main>

<footer class="flex h-[23px] items-center border-t border-[#8b929b] bg-gradient-to-b from-[#e2e5e9] to-[#b8bec5] text-[#444]"><span class="ml-[8px]" data-w="45">항목: 56</span><i class="ml-[9px] h-[19px] w-px bg-[#8b929b]"></i>
<i class="ml-auto h-[19px] w-px bg-[#8b929b]"></i><span class="ml-[4px] flex h-[18px] w-[19px] items-center justify-center rounded-[2px] border border-[#c98a1c] bg-[#ffd76a]"><svg class="h-[10px] w-[11px]" viewBox="0 0 11 10"><path d="M.5.500h10v9H.5zM3 1v8M8 1v8" fill="#eee" stroke="#555"/></svg></span>
<svg class="ml-[5px] h-[11px] w-[11px]" viewBox="0 0 11 11"><path d="M.5 1h4.500v9H.5zM6 1h4.500v9H6zM1 3h3M1 5h3M1 7h3M7 3h3M7 5h3M7 7h3" fill="#eee" stroke="#555"/></svg>
<span class="ml-[13px]" data-w="31">100%</span>
<svg class="mr-[4px] ml-[8px] h-[18px] w-[132px]" viewBox="0 0 132 18"><path d="M16 9h100" stroke="#7d848d"/><circle cx="8" cy="9" r="7.300" fill="#f3f4f5" stroke="#777"/><path d="M4.500 9h7" stroke="#444" stroke-width="2"/><circle cx="124" cy="9" r="7.300" fill="#f3f4f5" stroke="#777"/><path d="M120.500 9h7M124 5.500v7" stroke="#444" stroke-width="2"/><path d="M62.500 3h8v8l-4 4-4-4z" fill="#fff" stroke="#666"/></svg>
</footer>
</div>
</div>

<!-- Browser and taskbar on the right monitor -->
<div class="flex h-[1080px] w-[1920px] flex-col bg-white">
<div class="relative flex h-[25px] bg-[linear-gradient(90deg,#8ba9cc_0,#6f95c3_300px,#3468a6_600px,#2a5e99_850px,#2a5f9b_1200px,#205083_1500px,#204d80_1700px,#4d76a3_1920px)] text-[12px] text-[#5a5f66]">
<div class="absolute inset-x-0 bottom-0 h-[5px] bg-gradient-to-b from-transparent to-[#88a5c8]"></div>
<div id="tabs" class="relative flex h-full items-end pl-[5px]"></div>
<svg class="relative mt-[5px] ml-[2px] h-[16px] w-[32px]" viewBox="0 0 32 16"><path d="M1 1h21q2 0 3 3l5 11H9q-2 0-3-3z" fill="#b9c9de" stroke="#6c86a8"/></svg>
<div class="relative ml-auto flex items-start pr-[3px]">
<div class="mr-[4px] flex h-[18px] w-[29px] items-center justify-center rounded-b-[4px] border border-t-0 border-[#b4c4d8] bg-gradient-to-b from-[#6784a7] to-[#1c3f6b] font-bold text-white">한</div>
<div class="flex h-[18px] overflow-hidden rounded-b-[4px] border border-t-0 border-[#c3cfdd]">
<div class="flex w-[29px] items-center justify-center border-r border-[#c3cfdd] bg-gradient-to-b from-[#8ca1bb] to-[#46658c]"><i class="mt-1 h-[5px] w-[12px] border border-[#445] bg-white"></i></div>
<div class="flex w-[27px] items-center justify-center border-r border-[#c3cfdd] bg-gradient-to-b from-[#8ca1bb] to-[#46658c]"><svg class="size-[12px]" viewBox="0 0 12 12"><path d="M4 1.500h7v7H9M1.500 4h7v7h-7z" fill="none" stroke="#fff" stroke-width="2"/></svg></div>
<div class="flex w-[46px] items-center justify-center bg-gradient-to-b from-[#d58a78] via-[#c5432b] to-[#b8341b]"><svg class="size-[10px]" viewBox="0 0 10 10"><path d="m1 1 8 8M9 1 1 9" stroke="#fff" stroke-width="2.800"/></svg></div>
</div></div>
</div>
<div class="flex h-[36px] items-center border-b border-[#a6a6a6] bg-gradient-to-b from-[#fbfbfb] to-[#e4e4e4] pb-px">
<svg class="ml-[9px] h-[14px] w-[17px]" viewBox="0 0 17 14"><path d="M8 1 2 7l6 6M2 7h14" fill="none" stroke="#505050" stroke-width="2.600"/></svg>
<svg class="ml-[12px] h-[14px] w-[17px]" viewBox="0 0 17 14"><path d="m9 1 6 6-6 6M15 7H1" fill="none" stroke="#c4c4c4" stroke-width="2.400"/></svg>
<svg class="ml-[12px] size-[16px]" viewBox="0 0 16 16"><path d="M13.500 10.500A6 6 0 1 1 12.500 4" fill="none" stroke="#505050" stroke-width="2.600"/><path d="M15 .5V7H8.500z" fill="#505050"/></svg>
<div class="ml-[11px] flex h-[27px] w-[1695px] items-center rounded-[2px] border border-[#ababab] bg-white pl-[8px] font-['Noto_Sans'] text-[16px] leading-[22px] text-[#808080]"><svg class="mr-[6px] h-[16px] w-[12px]"><use href="#pg"/></svg><span data-w="383"><span class="text-[#1a1a1a]">localhost</span>:1841/example/chapter3/8_VBoxLayout.html</span><svg class="mr-[4px] ml-auto size-[18px]" viewBox="0 0 18 18"><path d="m9 1.200 2.300 5.400 5.900.5-4.500 3.900 1.400 5.700L9 13.700l-5.100 3 1.400-5.700L.8 7.100l5.900-.5z" fill="none" stroke="#666" stroke-width="1.200"/></svg></div>
<svg class="ml-[9px] h-[13px] w-[19px]" viewBox="0 0 19 13"><path d="M5 3.500h12.500v8h-12V8" fill="none" stroke="#3ec41a" stroke-width="2.200"/><path d="M3.500 0v7M0 3.500h7" stroke="#17a0ee" stroke-width="2"/><path d="M13 7h2" stroke="#3ec41a" stroke-width="2"/></svg>
<svg class="ml-[13px] size-[19px]" viewBox="0 0 19 19"><circle cx="9.500" cy="9.500" r="9.500" fill="#25b37b"/><path d="M14 6.500A5 5 0 1 0 14.500 10H10" fill="none" stroke="#fff" stroke-width="2"/><path d="m10 10 4.500.500-.5 4z" fill="#fff"/></svg>
<span class="ml-[13px] flex size-[19px] items-center justify-center rounded-[2px] bg-[#b3b3b3] text-[15px] text-white">T</span>
<svg class="ml-[16px] h-[13px] w-[13px]" viewBox="0 0 13 13"><path d="M0 1.500h13M0 6.500h13M0 11.500h13" stroke="#505050" stroke-width="3"/></svg>
</div>
<div class="flex-1 font-['Liberation_Sans'] text-[13px] leading-[17px] text-black">
<section class="flex h-[300px] w-[300px] flex-col">
<h1 class="flex h-[36px] items-center bg-[#f5f5f5] pl-[10px] text-[15px] text-[#3482c5]"><span data-w="77">Vbox layout</span></h1>
<div class="flex flex-1 flex-col border border-[#cfcfcf] px-[10px] pt-[10px]">
<div class="flex w-[200px] flex-col text-black">
<h2 class="flex h-[36px] items-center bg-[#f5f5f5] pl-[10px] text-[15px] text-[#3482c5]"><span data-w="63">first panel</span></h2>
<div class="flex h-[34px] flex-col items-start overflow-hidden border border-[#cfcfcf]"><span data-w="68">width 150px</span><span data-w="67">height 70px</span></div>
<h2 class="flex h-[36px] items-center bg-[#f5f5f5] pl-[10px] text-[15px] text-[#3482c5]"><span data-w="87">second panel</span></h2>
<div class="flex h-[36px] flex-col items-start overflow-hidden border border-[#cfcfcf]"><span data-w="55">width 100</span><span data-w="84">height variable</span></div>
<h2 class="flex h-[36px] items-center bg-[#f5f5f5] pl-[10px] text-[15px] text-[#3482c5]"><span data-w="67">third panel</span></h2>
<div class="flex h-[64px] flex-col items-start overflow-hidden border border-[#cfcfcf]"><span data-w="68">width 200px</span><span data-w="60">height 100</span></div>
</div>
</div>
</section>
</div>

<footer class="relative flex h-[40px] items-center overflow-hidden border-t border-[#16334f] bg-[linear-gradient(90deg,#1f5e92_0,#4d94c4_50px,#2e7fb9_90px,#67b3b4_170px,#3f94cb_230px,#3b93cf_600px,#2e86c6_900px,#2478bd_1150px,#1f6cb0_1270px,#1c68ad_1350px,#15518d_1550px,#123f70_1700px,#13365f_1920px)]">
<i class="absolute top-[-4px] left-[1315px] h-[48px] w-[22px] skew-x-[48deg] bg-white/40 blur-[5px]"></i>
<svg class="ml-[9px] size-[36px]" viewBox="0 0 36 36"><circle cx="18" cy="18" r="17.500" fill="url(#orb)" stroke="#0e3660"/><path d="M9 11q4-3 8 0l-1.500 7q-4-2-7.500 0z" fill="#ee5a24"/><path d="M18.500 11.500q4 2 8 0L25 18.500q-4 2-8 0z" fill="#84c341"/><path d="M7.500 19.500q4-2 7.500 0L13.500 27q-4-3-7.500 0z" fill="#35a5e5"/><path d="M16.500 20q4 2 8 0L23 27.500q-4 2-8 0z" fill="#fcc927"/></svg>
<svg class="ml-[29px] size-[30px]" viewBox="0 0 30 30"><path d="M26 17H9a6.500 6.500 0 0 0 12 3h5Q23 28 15 28 4 28 4 16.500 4 6 15 6t11 11M9.500 13.500h11Q20 10 15 10t-5.500 3.500" fill="#8ad8fa" fill-rule="evenodd" stroke="#1b7fc0" stroke-width=".8"/><path d="M5 27Q-2 32 2 21 8 8 20 3q9-4 7 4" fill="none" stroke="#f3c52b" stroke-width="2.400"/></svg>
<svg class="ml-[31px] size-[32px]" viewBox="0 0 32 32"><path d="M2 5h5V2h9v3h13v22H2z" fill="#f4d67a" stroke="#c39a3a"/><path d="M4 3h5v3H4zM14 3h5v3h-5z" fill="#58b06a"/><path d="M1 10h29v16H1z" fill="#fbe7a4" stroke="#d3a94c"/><path d="M6 31V20h20v11h-5v-6H11v6z" fill="#bfe3f6" stroke="#6ab0da"/></svg>
<svg class="ml-[31px] h-[26px] w-[26px]" viewBox="0 0 26 26"><path d="M8 3h17v20H8z" fill="#8cc4ee" stroke="#4a8fc8"/><path d="M1 1h19v24H1z" fill="#b5dcf6" stroke="#5ea3d6"/><circle cx="11" cy="13" r="8.500" fill="#ee7420" stroke="#fff"/><path d="m8 8 8 5-8 5z" fill="#fff"/></svg>
<div class="ml-[21px] flex h-[38px] w-[59px] rounded-[3px] border border-[#24506f] bg-[#a4cbe6]"><div class="flex w-[53px] items-center justify-center rounded-[3px] border border-white/80 bg-gradient-to-b from-[#e8f2f9] to-[#b9d9ef]"><svg class="size-[29px]" viewBox="0 0 30 30"><circle cx="15" cy="15" r="14.500" fill="#fbc917"/><path d="M15 15 2.400 7.800A14.500 14.500 0 0 1 27.600 7.800z" fill="#df4030"/><path d="M2.400 7.800 9.500 19l5 10.500A14.500 14.500 0 0 1 2.400 7.800" fill="#3ca84d"/><circle cx="15" cy="15" r="6.700" fill="#fff"/><circle cx="15" cy="15" r="5.300" fill="#3f7fe0"/></svg></div></div>
<svg class="ml-[16px] size-[32px]" viewBox="0 0 32 32"><path d="M1 1h14L1 15z" fill="#fff"/><circle cx="16" cy="16" r="14.500" fill="#1c3fa8" stroke="#c4cfe8" stroke-width="2"/><path d="m15 4-5 13h5l-1 11 8-15h-5z" fill="#fff"/></svg>
<div class="ml-[17px] flex gap-[4px]">
<div class="flex h-[38px] w-[58px] items-center justify-center rounded-[3px] border border-[#a9d2ec] bg-white/35 outline outline-[#24587f]"><svg class="size-[30px]" viewBox="0 0 30 30"><path d="m1 6 13-5 7 17-13 6z" fill="#8fd08c"/><path d="m9 11 19-3v20H11z" fill="#f8ee9a" stroke="#cfc060"/></svg></div>
<div class="flex h-[38px] w-[58px] items-center justify-center rounded-[3px] border border-[#a9d2ec] bg-white/30 outline outline-[#24587f]"><svg class="mr-[4px] h-[32px] w-[26px]" viewBox="0 0 26 32"><path d="M13 32Q10 24 4 20A12 12 0 1 1 22 20q-6 4-9 12" fill="#949494"/><path d="M17 8.500q-1-2-4-2-4.500 0-4.500 5t4.500 5q3 0 4-2" fill="none" stroke="#fff" stroke-width="2.400"/></svg></div>
<div class="flex h-[38px] w-[58px] items-center justify-center rounded-[3px] border border-[#a9d2ec] bg-white/30 outline outline-[#24587f]"><svg class="size-[30px]" viewBox="0 0 30 30"><path d="M1 1h26v27H1z" fill="#f5c24a" stroke="#c6851a"/><path d="M3 3h22v18H3z" fill="#fdf1d2"/><ellipse cx="11" cy="12" rx="5" ry="7" fill="none" stroke="#e58a06" stroke-width="3.600"/><circle cx="23" cy="13" r="6" fill="#fff3d0" stroke="#db9426" stroke-width="1.500"/><path d="M23 9v4h3" stroke="#a56" fill="none"/></svg></div>
<div class="flex h-[38px] w-[58px] items-center justify-center rounded-[3px] border border-[#a9d2ec] bg-white/30 outline outline-[#24587f]"><svg class="size-[32px]" viewBox="0 0 32 32"><rect width="32" height="32" rx="2" fill="#43295f"/><circle cx="16" cy="16" r="12" fill="none" stroke="#d8d8d8" stroke-width="4" stroke-dasharray="4.500 3"/><circle cx="16" cy="16" r="9.500" fill="#333" stroke="#ddd" stroke-width="2"/><text x="16" y="16" font-family="Liberation Sans" font-size="10" text-anchor="middle" fill="#f58c1f" textLength="31">Java EE</text><text x="16" y="25" font-family="Liberation Sans" font-size="10" text-anchor="middle" fill="#f58c1f">IDE</text></svg></div>
<div class="flex h-[38px] w-[58px] items-center justify-center rounded-[3px] border border-[#a9d2ec] bg-white/30 outline outline-[#24587f]"><svg class="h-[32px] w-[30px]" viewBox="0 0 30 32"><path d="M8 4v22q10 6 20 0V4z" fill="#b02a80" stroke="#7a1656"/><ellipse cx="18" cy="4.500" rx="10" ry="3.500" fill="#dd6fb0" stroke="#8a2064"/><path d="M8 12q10 5 20 0M8 19q10 5 20 0" fill="none" stroke="#e58cc4"/><circle cx="8" cy="23" r="5.500" fill="none" stroke="#aaa" stroke-width="5"/><circle cx="8" cy="23" r="7.500" fill="none" stroke="#bbb" stroke-width="2" stroke-dasharray="3 2"/></svg></div>
<div class="flex h-[38px] w-[58px] items-center justify-center rounded-[3px] border border-[#a9d2ec] bg-white/30 outline outline-[#24587f]"><svg class="size-[32px]" viewBox="0 0 32 32"><path d="m2 3 17-3 10 6-4 10 5 9-13 6-12-3z" fill="#18b8dc"/><path d="m17 0 11 3v12l-11-4z" fill="#f1ec4a"/><path d="M5 6h21v21H5z" fill="#111"/><text x="15.500" y="17" font-family="Liberation Sans" font-weight="bold" font-size="10.500" text-anchor="middle" fill="#fff">WS</text><path d="M8 23.500h8" stroke="#fff" stroke-width="1.600"/></svg></div>
<div class="flex h-[38px] w-[58px] items-center justify-center rounded-[3px] border border-[#a9d2ec] bg-white/30 outline outline-[#24587f]"><svg class="size-[32px]" viewBox="0 0 32 32"><path d="M0 0h32v32H0z" fill="#fbe300"/><path d="M16 5c8 0 12.500 4.500 12.500 10S23 24.500 17 25l-5 4 1-4.500Q3.500 22 3.500 15C3.500 9.500 8 5 16 5" fill="#3a1d1f"/><text x="16" y="18" font-family="Liberation Sans" font-weight="bold" font-size="8" text-anchor="middle" fill="#fbe300">TALK</text></svg></div>
<div class="flex h-[38px] w-[58px] items-center justify-center rounded-[3px] border border-[#a9d2ec] bg-white/30 outline outline-[#24587f]"><svg class="mr-[2px] h-[26px] w-[30px]" viewBox="0 0 30 26"><path d="M.5.500h29v25H.5z" fill="#060606" stroke="#9a9a9a"/><path d="M1 1h28v2.500H1z" fill="#ddd"/><text x="3" y="12" font-family="Liberation Mono" font-size="8" fill="#fff">C:\_</text></svg></div>
</div>
<div class="ml-auto flex items-center text-white">
<svg class="h-[17px] w-[17px]" viewBox="0 0 17 17"><circle cx="7.500" cy="7" r="6.800" fill="#4f8a6c"/><path d="M3 4q4-3 5 1t-3 4z" fill="#b9cf7a"/><path d="m7 14 7-8 3 2-7 8z" fill="#f1a845" stroke="#fff" stroke-width=".7"/></svg>
<span class="mb-[4px] ml-[2px] flex h-[22px] w-[20px] items-center justify-center border border-[#1e3658] bg-[#4c749f] font-['Liberation_Sans'] text-[20px]">A</span>
<span class="mb-[4px] flex h-[22px] w-[19px] items-center justify-center border border-[#1e3658] bg-[#3f648f] text-[17px]">漢</span>
<span class="mb-[4px] ml-[5px] flex size-[16px] items-center justify-center rounded-full border border-[#b7c4e8] bg-[#1a36a8] text-[12px] font-bold">?</span>
<svg class="mb-[5px] ml-[11px] h-[18px] w-[9px]" viewBox="0 0 9 18"><path d="M3 1h5.500v4H3zM.5 3H6v4H.5z" fill="#14406f" stroke="#fff"/><path d="M2 14h6l-3 3z" fill="#fff"/></svg>
<svg class="ml-[11px] h-[4px] w-[8px] text-white"><use href="#up"/></svg>
<svg class="ml-[14px] size-[16px]" viewBox="0 0 16 16"><path d="M1 1v14M2 2q4-1 6 1t6 0v6q-4 2-6 0t-6 0z" stroke="#fff" fill="#dfe7ee"/><circle cx="11" cy="11" r="4.700" fill="#d92a1c"/><path d="m9 9 4 4M13 9l-4 4" stroke="#fff" stroke-width="1.300"/></svg>
<svg class="ml-[8px] size-[15px]" viewBox="0 0 15 15"><path d="M2 2h6v11H2zM4 .5h2" fill="none" stroke="#fff" stroke-width="1.500"/><path d="M7 5h6v4q-3 3-6 0zM8.500 2v3M11.500 2v3M10 10v5" fill="#fff" stroke="#fff"/></svg>
<svg class="ml-[9px] size-[16px]" viewBox="0 0 16 16"><path d="M5 4.500h10v8H5zM7 14.500h6" fill="none" stroke="#fff" stroke-width="1.500"/><path d="M1 1v3h4V1M3 4v7" fill="none" stroke="#fff" stroke-width="1.400"/></svg>
<svg class="ml-[11px] h-[14px] w-[14px]" viewBox="0 0 14 14"><path d="M0 4.500h3l4-4v13l-4-4H0zM9.500 4.500q2 2.500 0 5" fill="#fff" stroke="#fff" stroke-width=".8"/></svg>
<div class="ml-[19px] flex w-[67px] flex-col items-center text-[12px] leading-[17px]"><span data-w="51">오후 1:54</span><span data-w="66">2016-05-04</span></div>
<i class="ml-[12px] h-[38px] w-[13px] border border-[#7d94b0] bg-gradient-to-b from-[#4f7196] to-[#15365e]"></i>
</div>
</footer>
</div>
</div>

<script>
const byId = id => document.getElementById(id);

// Folder tree: icon, label, label width, unread, selected
const folder = ([icon, label, w, unread, sel], h) =>
  `<div class="flex ${h} w-[167px] items-center"><div class="flex h-[18px] w-full items-center pl-[25px] ${sel ? 'bg-[#c5ccd8]' : ''}"><svg class="size-[16px]"><use href="#${icon}"/></svg><span class="ml-[5px] ${unread ? 'font-bold' : ''}" data-w="${w}">${label}</span>${unread ? `<span class="ml-[4px] text-[#3a6fe0]" data-w="14">(${unread})</span>` : ''}</div></div>`;
byId('fav').innerHTML = [['inbox','받은 편지함',63],['sent','보낸 편지함',63],['trash','지운 편지함',63,1]].map(f => folder(f, 'h-[22px]')).join('');
byId('acct').innerHTML =
  [['inbox','받은 편지함',63],['draft','임시 보관함',63],['sent','보낸 편지함',63,0,1],['trash','지운 편지함',63,1]].map(f => folder(f, 'h-[20px]')).join('') +
  '<div class="h-[7px]"></div>' +
  [['rss','RSS 피드',48],['sfold','검색 폴더',51],['outbox','보낼 편지함',63],['junk','정크 메일',51]].map(f => folder(f, 'h-[20px]')).join('');

// Message list: a short entry opens a group, a long one is a message
const rows = [
  ['오늘', 23],
  ["'오은지'", 41, '오전 10:39', 59, '주간업무보고서_정희', 112, 1],
  ["'오은지'", 41, '오전 9:27', 52, '4월야근식대_마현', 95, 1],
  ["'오은지'", 41, '오전 9:24', 52, '4월야근식대_마현', 95, 1],
  ['어제', 23],
  ["'hyelilee@tbroad.com'", 119, '(화) 오...', 45, '[쇼핑엔T] 4월적립금 사용...', 146, 1],
  ['월요일', 35],
  ["'yn0140@tbroad.com'; 'sjro@...", 171, '', 0, '4월프로모션비용공제, 4월 ...', 154, 1],
  ["'오은지'", 41, '(월) 오후 2:35', 76, '4월야근식대_정희', 95, 1],
  ['지난 주', 39],
  ["'김수현'", 41, '04-29 (금)', 57, 'RE: [공지]2015년 어버이날 "...', 161, 0],
  ["'오은지'", 41, '04-29 (금)', 57, '주간업무보고서_정희', 112, 1, 1],
  ['2주 전', 34],
  ["'오은지'", 41, '2016-04-22', 66, '주간업무보고서_정희_수정본', 153, 1],
  ["'오은지'", 41, '2016-04-22', 66, '주간업무보고서_정희', 112, 1],
  ["'윤경아'", 41, '2016-04-20', 66, '[쇼핑엔T] 데이터요청_장기...', 151, 1],
  ["'jsong@nicevan.co.kr'", 116, '2016-0...', 49, '[쇼핑엔T] NICEPAY 카드취소 ...', 166, 0],
];
byId('list').innerHTML = rows.map(r => r.length === 2
  ? `<div class="flex h-[39px] items-end border-b border-dashed border-[#a9aeb5] pb-[2px] pl-[11px] font-medium text-[#222]"><svg class="mb-[5px] size-[6px]"><use href="#tri"/></svg><span class="ml-[11px]" data-w="${r[1]}">${r[0]}</span></div>`
  : `<div class="flex h-[39px] pl-[6px] ${r[7] ? 'bg-[#c5ccd8]' : ''}"><svg class="mt-[3px] size-[16px]"><use href="#env"/></svg><div class="ml-[6px] flex w-[172px] flex-col pt-[4px]"><div class="flex justify-between ${r[7] ? 'text-[#333]' : 'text-black'}"><span data-w="${r[1]}">${r[0]}</span>${r[2] ? `<span data-w="${r[3]}">${r[2]}</span>` : ''}</div><div class="mt-[2px] flex justify-between ${r[7] ? 'text-[#222]' : 'text-[#777]'}"><span data-w="${r[5]}">${r[4]}</span>${r[6] ? '<svg class="mt-[-1px] h-[11px] w-[8px]"><use href="#clip"/></svg>' : ''}</div></div><div class="mt-[13px] ml-[16px] flex h-[13px] items-center gap-[3px] ${r[7] ? 'text-white' : 'text-[#cdcdcd]'}"><i class="h-[12px] w-[8px] border border-current"></i><svg class="size-[14px]"><use href="#flag"/></svg></div></div>`).join('');

// Mini calendar, May 2016
byId('wk').innerHTML = [...'일월화수목금토'].map(d => `<span class="pr-[4px]">${d}</span>`).join('');
let cells = '';
for (let i = 0; i < 42; i++) {
  const n = i < 7 ? 24 + i : i < 38 ? i - 6 : i - 37;
  const tone = i < 7 || i > 37 ? 'text-[#a3a8af]' : '';
  const today = n === 4 && i < 20;
  cells += `<span class="h-[18px] pr-[4px] ${tone} ${today ? 'relative' : ''}">${today ? '<i class="absolute top-0 right-0 h-[18px] w-[20px] border border-[#cb5b12]"></i>' : ''}${n}</span>`;
}
byId('days').innerHTML = cells;

// Browser tabs
const icons = {
  g: '<svg class="size-[14px]" viewBox="0 0 16 16"><path d="M13.500 4A6.500 6.500 0 0 0 2.500 4.500" stroke="#ea4335" stroke-width="2.600" fill="none"/><path d="M2.500 4.500a6.500 6.500 0 0 0 0 7" stroke="#fbbc05" stroke-width="2.600" fill="none"/><path d="M2.500 11.500a6.500 6.500 0 0 0 10 1" stroke="#34a853" stroke-width="2.600" fill="none"/><path d="M12.500 12.500q2-2 2-4.500H8" stroke="#4285f4" stroke-width="2.600" fill="none"/></svg>',
  t: '<svg class="size-[16px]" viewBox="0 0 16 16"><circle cx="8" cy="8" r="8" fill="#e0532f"/><path d="M4 5h2M7 5h2M10 5h2M4 8h2M10 8h2M7 8h2M7 11h2M7 13h2" stroke="#fff" stroke-width="1.700"/></svg>',
  p: '<svg class="h-[14px] w-[11px]"><use href="#pg"/></svg>',
  h: '<svg class="size-[16px]" viewBox="0 0 16 16"><path d="M8 .3a8 8 0 0 0-2.500 15.500v-2.500q-2 .3-2.700-1.300l-.8-1q1-.2 1.700 1 .7.900 1.800.4.100-.8.600-1.200-3.500-.5-3.500-4 0-1.300.8-2.200-.3-1 .1-2.100 1 0 2.300.9a8 8 0 0 1 4.400 0q1.300-.9 2.300-.9.400 1.100.1 2.100.8.900.8 2.200 0 3.500-3.500 4 .6.600.6 1.600v3A8 8 0 0 0 8 .3" fill="#1d2329"/></svg>',
};
byId('tabs').innerHTML = [
  ['g', 'ORA 01858 - Google 검색', 138, 200, 0], ['t', 'HeeStory :: heeestorys', 121, 191, 0],
  ['p', '6_TableLayout', 77, 195, 1], ['h', 'Editing ExtJs/Chapter2.md', 137, 194, 0],
].map(([ic, label, w, tw, on]) => `<div class="relative flex h-[24px] items-center pr-[11px] pl-[14px] ${on ? 'text-[#333]' : ''}" style="width:${tw}px"><svg class="absolute inset-0 h-[24px] w-full" viewBox="0 0 196 24" preserveAspectRatio="none"><path d="M0 24.500 7 3q1-2.500 4-2.500h172q3 0 4 2.500l8 21.500z" fill="${on ? '#fbfbfb' : '#bac9dd'}" stroke="#7c93b2" stroke-width=".8"/></svg><span class="relative flex w-[16px] justify-center">${icons[ic]}</span><span class="relative ml-[5px]" data-w="${w}">${label}</span><svg class="relative ml-auto size-[9px]"><use href="#x"/></svg></div>`).join('');

// Track each label so that it takes its intended width
document.querySelectorAll('[data-w]').forEach(el => {
  el.classList.add('inline-block', 'shrink-0');
  const n = [...el.textContent].length;
  el.style.letterSpacing = ((+el.dataset.w - el.getBoundingClientRect().width) / n).toFixed(3) + 'px';
});
</script>
</body>
</html>
